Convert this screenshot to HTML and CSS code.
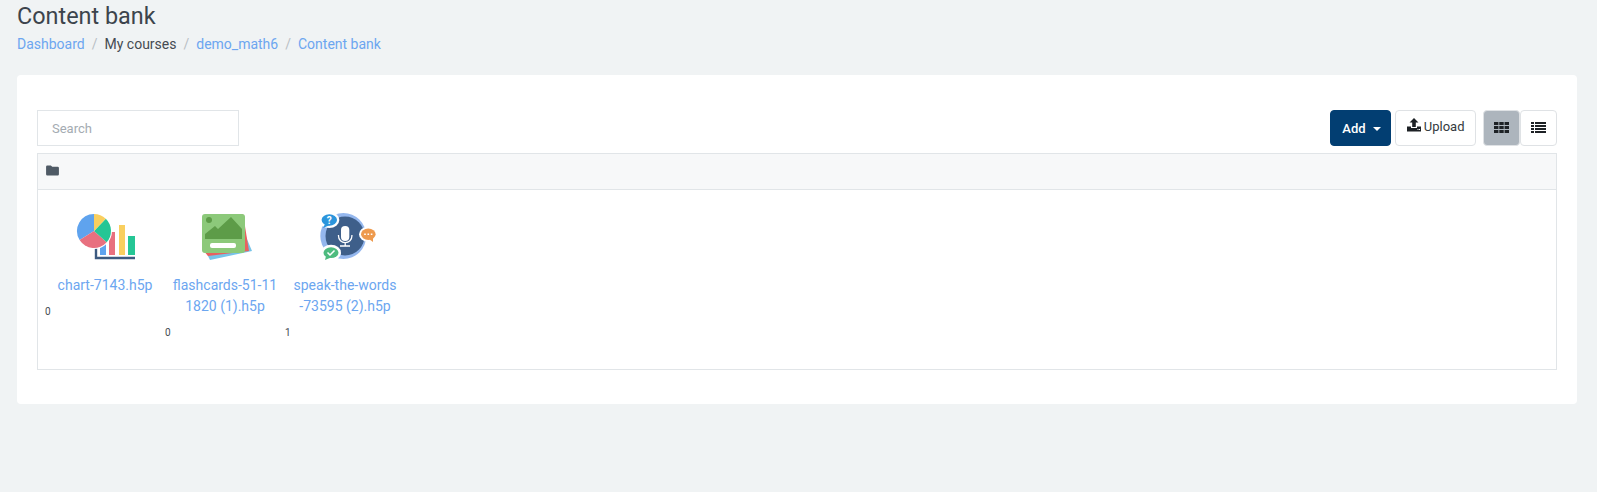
FILE: index.html
```html
<!doctype html>
<html>
    <head>
        <title>Content bank</title>
        <link rel="stylesheet" href="styles.css">
    </head>
    <body>
        <div class="page_header">
            <h1>Content bank</h1>
            <ol class="crumbs">
                <li><a href="#">Dashboard</a></li>
                <li>My courses</li>
                <li><a href="#">demo_math6</a></li>
                <li><a href="#">Content bank</a></li>
            </ol>
        </div>

        <div class="card">
            <div class="toolbar">
                <input class="search" type="text" placeholder="Search">
                <div class="actions">
                    <button class="btn btn_add">Add<span class="caret"></span></button>
                    <button class="btn btn_upload">
                        <svg width="14" height="14" viewBox="0 0 14 14"><path d="M7 0 L11.5 4.6 H8.8 V9 H5.2 V4.6 H2.5 Z" fill="#1d2125"/><path d="M0 8.5 H4 V10 H10 V8.5 H14 V13.5 H0 Z" fill="#1d2125"/><rect x="10.5" y="11" width="1" height="1" fill="#fff"/><rect x="12" y="11" width="1" height="1" fill="#fff"/></svg>
                        Upload
                    </button>
                    <div class="view_switch">
                        <button class="btn btn_view active">
                            <svg width="15" height="11" viewBox="0 0 15 11"><path d="M0 0h4.4v3H0zM5.3 0h4.4v3H5.3zM10.6 0H15v3h-4.4zM0 4h4.4v3H0zM5.3 4h4.4v3H5.3zM10.6 4H15v3h-4.4zM0 8h4.4v3H0zM5.3 8h4.4v3H5.3zM10.6 8H15v3h-4.4z" fill="#1d2125"/></svg>
                        </button>
                        <button class="btn btn_view">
                            <svg width="15" height="11" viewBox="0 0 15 11"><path d="M0 0h3v2H0zM4 0h11v2H4zM0 3h3v2H0zM4 3h11v2H4zM0 6h3v2H0zM4 6h11v2H4zM0 9h3v2H0zM4 9h11v2H4z" fill="#1d2125"/></svg>
                        </button>
                    </div>
                </div>
            </div>

            <div class="folder_bar">
                <svg width="13" height="11" viewBox="0 0 14 12"><path d="M1.3 0.5 H5.2 L6.7 2 H12.7 A1.3 1.3 0 0 1 14 3.3 V10.2 A1.3 1.3 0 0 1 12.7 11.5 H1.3 A1.3 1.3 0 0 1 0 10.2 V1.8 A1.3 1.3 0 0 1 1.3 0.5 Z" fill="#4f5a65"/></svg>
            </div>

            <div class="files">
                <div class="file">
                    <svg class="file_icon" width="64" height="52" viewBox="0 0 64 52">
                        <path d="M23 36 V48 H62" fill="none" stroke="#3c5a80" stroke-width="2.4"/>
                        <rect x="27" y="30" width="6" height="15" fill="#5fa3ee"/>
                        <rect x="36" y="22" width="6" height="23" fill="#e8707f"/>
                        <rect x="46" y="15" width="6" height="30" fill="#f9cf5f"/>
                        <rect x="55" y="26" width="7" height="19" fill="#25c695"/>
                        <circle cx="21" cy="21" r="18" fill="#fff"/>
                        <path d="M21 21 L21 4 A17 17 0 0 0 6.6 30 Z" fill="#5fa3ee"/>
                        <path d="M21 21 L6.6 30 A17 17 0 0 0 33.7 32.3 Z" fill="#e8707f"/>
                        <path d="M21 21 L33.7 32.3 A17 17 0 0 0 32.8 8.8 Z" fill="#25c695"/>
                        <path d="M21 21 L32.8 8.8 A17 17 0 0 0 21 4 Z" fill="#f9cf5f"/>
                    </svg>
                    <a class="file_name" href="#">chart-7143.h5p</a>
                    <div class="file_count">0</div>
                </div>
                <div class="file">
                    <svg class="file_icon" width="64" height="52" viewBox="0 0 64 52">
                        <polygon points="46,10 59,41 17,50 12,40" fill="#76c4e8"/>
                        <polygon points="50,4 56,41 15,46 10,40" fill="#e8615f"/>
                        <rect x="9" y="4" width="43" height="39" rx="3" fill="#8cc97a"/>
                        <circle cx="16" cy="10" r="3" fill="#5d9c48"/>
                        <path d="M12 29 V24 L22 16 L25 19 L38 7 L49 19 V29 Z" fill="#5d9c48"/>
                        <rect x="17" y="33" width="26" height="5" rx="2" fill="#fff"/>
                    </svg>
                    <a class="file_name" href="#">flashcards-51-11<br>1820 (1).h5p</a>
                    <div class="file_count">0</div>
                </div>
                <div class="file">
                    <svg class="file_icon" width="64" height="52" viewBox="0 0 64 52">
                        <circle cx="30.3" cy="26" r="23" fill="#94b7ee"/>
                        <circle cx="32" cy="26" r="19.5" fill="#3e5f8a"/>
                        <rect x="28" y="16" width="8.3" height="15" rx="4.1" fill="#fff"/>
                        <path d="M25.5 25 V26 A6.7 6.7 0 0 0 38.9 26 V25 M32.2 32.7 V36 M27 36 H37" fill="none" stroke="#fff" stroke-width="1.3"/>
                        <ellipse cx="16.3" cy="10" rx="10" ry="8" fill="#fff"/>
                        <ellipse cx="16.3" cy="10" rx="7.7" ry="5.7" fill="#2b95dc"/>
                        <path d="M12 14 L10 18 L17 15 Z" fill="#2b95dc"/>
                        <text x="16.3" y="13.5" class="bubble_mark">?</text>
                        <ellipse cx="55" cy="24.3" rx="9" ry="7.5" fill="#fff"/>
                        <ellipse cx="55.3" cy="24.3" rx="7.3" ry="5.7" fill="#ee9a4d"/>
                        <path d="M56 29 L60 32 L60 27 Z" fill="#ee9a4d"/>
                        <path d="M51.2 23.5h1.6v1.6h-1.6zM54.5 23.5h1.6v1.6h-1.6zM57.8 23.5h1.6v1.6h-1.6z" fill="#fff"/>
                        <ellipse cx="18" cy="42.7" rx="10" ry="8" fill="#fff"/>
                        <ellipse cx="18" cy="42.7" rx="7.5" ry="5.4" fill="#4dbb7f"/>
                        <path d="M13 46 L12 50 L18 47.5 Z" fill="#4dbb7f"/>
                        <path d="M14.5 42.5 L17 45 L21.5 40.5" fill="none" stroke="#fff" stroke-width="1.5"/>
                    </svg>
                    <a class="file_name" href="#">speak-the-words<br>-73595 (2).h5p</a>
                    <div class="file_count">1</div>
                </div>
            </div>
        </div>
    </body>
</html>
```

FILE: styles.css
```css
body {
    padding: 0;
    margin: 0;
    height: 492px;
    background-color: #f0f3f4;
    color: #454b52;
    font-family: Roboto, sans-serif;
    font-size: 14px;
    line-height: 21px;
}
a {
    color: #6ca6f0;
    text-decoration: none;
}
h1 {
    font-size: 23.4px;
    font-weight: 400;
    line-height: 28px;
    margin: 0;
    color: #3c444c;
}
.page_header {
    padding: 2px 17px 0;
}
.crumbs {
    display: flex;
    list-style: none;
    margin: 4px 0 0;
    padding: 0;
}
.crumbs li + li::before {
    content: "/";
    color: #b9bfc5;
    padding: 0 7px;
}
.card {
    margin: 20px 20px 0 17px;
    padding: 35px 20px 34px;
    background-color: #fff;
    border-radius: 4px;
}
.toolbar {
    display: flex;
    justify-content: space-between;
    align-items: flex-start;
}
.search {
    width: 202px;
    height: 36px;
    box-sizing: border-box;
    border: 1px solid #e1e5e8;
    padding: 0 14px;
    font-family: Roboto, sans-serif;
    font-size: 13px;
    outline: none;
}
.search::placeholder {
    color: #a4abb2;
}
.actions {
    display: flex;
    gap: 4px;
}
.btn {
    height: 36px;
    box-sizing: border-box;
    border: 1px solid #dfe2e5;
    border-radius: 4px;
    background-color: #fff;
    color: #343a40;
    font-family: Roboto, sans-serif;
    font-size: 13px;
    padding: 0;
}
.btn_add {
    width: 61px;
    padding-left: 2px;
    border-color: #023e72;
    background-color: #023e72;
    color: #fff;
    font-weight: 500;
}
.caret {
    display: inline-block;
    margin-left: 7px;
    vertical-align: 2px;
    border-top: 4px solid #fff;
    border-left: 4px solid transparent;
    border-right: 4px solid transparent;
}
.btn_upload {
    width: 81px;
    padding-bottom: 4px;
}
.btn_upload svg {
    vertical-align: -1px;
}
.view_switch {
    display: flex;
    margin-left: 3px;
}
.btn_view {
    width: 37px;
    display: flex;
    align-items: center;
    justify-content: center;
    padding-bottom: 1px;
}
.btn_view.active {
    background-color: #adb5bd;
}
.folder_bar {
    display: flex;
    align-items: center;
    height: 37px;
    box-sizing: border-box;
    margin-top: 7px;
    padding: 0 0 2px 8px;
    background-color: #f7f8f9;
    border: 1px solid #e1e5e8;
}
.files {
    display: flex;
    align-items: flex-start;
    height: 180px;
    box-sizing: border-box;
    padding: 20px 0 0 7px;
    border: 1px solid #e1e5e8;
    border-top: none;
}
.file {
    width: 120px;
    text-align: center;
}
.file_icon {
    display: block;
    margin: 0 auto 13px;
}
.file_name {
    display: block;
    width: 110px;
    margin-left: 5px;
}
.file_count {
    text-align: left;
    font-size: 10px;
    line-height: 14px;
    margin-top: 9px;
}
.bubble_mark {
    fill: #fff;
    font-family: Roboto, sans-serif;
    font-size: 10px;
    font-weight: 700;
    text-anchor: middle;
}
```
